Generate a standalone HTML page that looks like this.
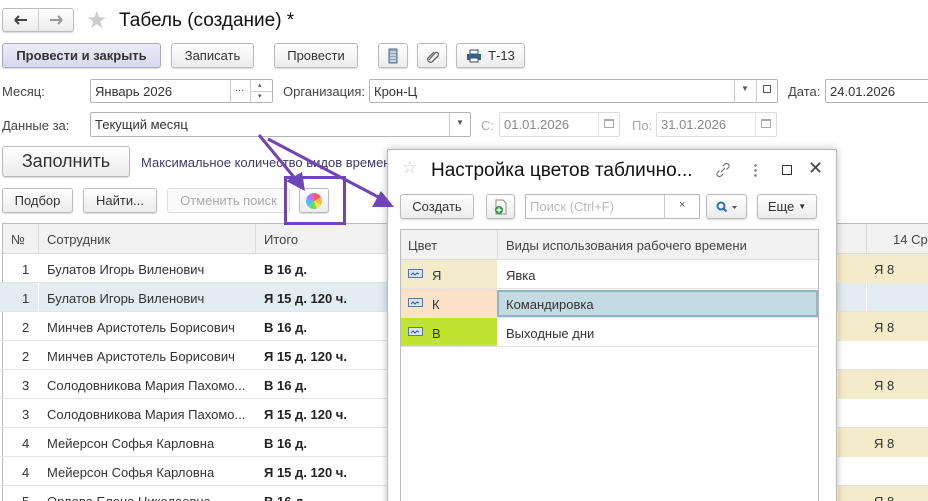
<!DOCTYPE html>
<html><head><meta charset="utf-8"><style>
*{box-sizing:border-box;margin:0;padding:0}
html,body{width:928px;height:501px;overflow:hidden}
body{background:#fff;font-family:"Liberation Sans",Arial,sans-serif;font-size:13px;color:#333;position:relative}
.a{position:absolute}
.btn{position:absolute;border:1px solid #bbb;border-radius:3px;background:linear-gradient(#fff,#ececec);box-shadow:0 1px 1px rgba(0,0,0,.15);display:flex;align-items:center;justify-content:center;font-size:13px;color:#333}
.inp{position:absolute;border:1px solid #b5b5b5;border-radius:2px;background:#fff;display:flex;align-items:center;padding-left:4px;font-size:13px;color:#333}
.lbl{position:absolute;font-size:13px;color:#444}
.row{position:absolute;left:0;width:928px;height:29px;border-bottom:1px solid #e4e4e4}
.row span{position:absolute;top:8px}
</style></head><body>
<div class="btn" style="left:2px;top:8px;width:72px;height:24px;padding:0"><svg width="36" height="14"><path d="M12 7h12M12 7l4-4M12 7l4 4" fill="none" stroke="#444" stroke-width="2"/></svg><span style="width:1px;height:22px;background:#ccc"></span><svg width="36" height="14"><path d="M12 7h12M24 7l-4-4M24 7l-4 4" fill="none" stroke="#999" stroke-width="2"/></svg></div>
<div class="a" style="left:86px;top:6px;font-size:24px;color:#ccc">★</div>
<div class="a" style="left:119px;top:10px;font-size:19px;color:#111">Табель (создание) *</div>
<div class="btn" style="left:2px;top:43px;width:159px;height:25px;background:linear-gradient(#ececf8,#d8d8ee);font-weight:bold;color:#333;border-color:#a8a8c8">Провести и закрыть</div>
<div class="btn" style="left:171px;top:43px;width:83px;height:25px">Записать</div>
<div class="btn" style="left:274px;top:43px;width:84px;height:25px">Провести</div>
<div class="btn" style="left:378px;top:43px;width:30px;height:25px"><svg width="10" height="16"><rect x="1" y="1" width="8" height="14" fill="#8aa4c0" stroke="#5a7494"/><path d="M2 4h6M2 7h6M2 10h6M2 13h6" stroke="#fff"/></svg></div>
<div class="btn" style="left:417px;top:43px;width:30px;height:25px"><svg width="14" height="14"><path d="M4 11L10 4a2 2 0 0 1 3 3L7 13a3 3 0 0 1-4-4l6-6" fill="none" stroke="#666" stroke-width="1.3"/></svg></div>
<div class="btn" style="left:456px;top:43px;width:69px;height:25px"><svg width="16" height="14" style="margin-right:6px"><rect x="4" y="1" width="8" height="4" fill="#fff" stroke="#2c4a70"/><rect x="1" y="5" width="14" height="6" fill="#3d5f88"/><rect x="4" y="9" width="8" height="4" fill="#fff" stroke="#2c4a70"/></svg>Т-13</div>
<div class="lbl" style="left:2px;top:84px">Месяц:</div>
<div class="inp" style="left:90px;top:79px;width:183px;height:24px">Январь 2026</div>
<div class="a" style="left:230px;top:80px;width:1px;height:22px;background:#ccc"></div>
<div class="a" style="left:235px;top:82px;font-size:11px;color:#555">...</div>
<div class="a" style="left:250px;top:80px;width:1px;height:22px;background:#ccc"></div>
<div class="a" style="left:251px;top:91px;width:21px;height:1px;background:#ccc"></div>
<div class="a" style="left:258px;top:81px;font-size:7px;color:#555">▴</div>
<div class="a" style="left:258px;top:92px;font-size:7px;color:#555">▾</div>
<div class="lbl" style="left:283px;top:84px">Организация:</div>
<div class="inp" style="left:369px;top:79px;width:409px;height:24px">Крон-Ц</div>
<div class="a" style="left:734px;top:80px;width:1px;height:22px;background:#ccc"></div>
<div class="a" style="left:741px;top:84px;font-size:8px;color:#555">▼</div>
<div class="a" style="left:756px;top:80px;width:1px;height:22px;background:#ccc"></div>
<div class="a" style="left:763px;top:85px;width:8px;height:8px;border:1px solid #555"></div>
<div class="lbl" style="left:788px;top:84px">Дата:</div>
<div class="inp" style="left:825px;top:79px;width:110px;height:24px">24.01.2026</div>
<div class="lbl" style="left:2px;top:118px">Данные за:</div>
<div class="inp" style="left:90px;top:112px;width:381px;height:25px">Текущий месяц</div>
<div class="a" style="left:449px;top:113px;width:1px;height:23px;background:#ccc"></div>
<div class="a" style="left:456px;top:118px;font-size:8px;color:#555">▼</div>
<div class="lbl" style="left:481px;top:118px;color:#aaa">С:</div>
<div class="inp" style="left:499px;top:112px;width:121px;height:25px;color:#888;border-color:#ddd">01.01.2026</div>
<div class="a" style="left:598px;top:113px;width:1px;height:23px;background:#e4e4e4"></div>
<div class="a" style="left:604px;top:119px;width:10px;height:9px;border:1px solid #aaa;border-top-width:2px"></div>
<div class="lbl" style="left:632px;top:118px;color:#aaa">По:</div>
<div class="inp" style="left:656px;top:112px;width:121px;height:25px;color:#888;border-color:#ddd">31.01.2026</div>
<div class="a" style="left:755px;top:113px;width:1px;height:23px;background:#e4e4e4"></div>
<div class="a" style="left:761px;top:119px;width:10px;height:9px;border:1px solid #aaa;border-top-width:2px"></div>
<div class="btn" style="left:2px;top:146px;width:128px;height:31px;font-size:18px;color:#333">Заполнить</div>
<div class="lbl" style="left:141px;top:155px;color:#3c3c6c">Максимальное количество видов времени</div>
<div class="btn" style="left:2px;top:188px;width:71px;height:25px">Подбор</div>
<div class="btn" style="left:83px;top:188px;width:74px;height:25px">Найти...</div>
<div class="btn" style="left:167px;top:188px;width:123px;height:25px;color:#aaa;background:#fafafa;box-shadow:none;border-color:#ddd">Отменить поиск</div>
<div class="btn" style="left:299px;top:188px;width:30px;height:25px"><div style="width:16px;height:16px;border-radius:50%;background:conic-gradient(#f56 0 60deg,#fb4 60deg 120deg,#ee4 120deg 160deg,#6d6 160deg 220deg,#5bf 220deg 290deg,#a7f 290deg 360deg)"></div></div>
<div class="a" style="left:2px;top:223px;width:940px;height:290px;border:1px solid #bbb;border-right:none;border-bottom:none"></div>
<div class="a" style="left:3px;top:224px;width:925px;height:30px;background:#f2f2f2;border-bottom:1px solid #ddd"></div>
<div class="a" style="left:38px;top:224px;width:1px;height:30px;background:#ddd"></div>
<div class="a" style="left:255px;top:224px;width:1px;height:30px;background:#ddd"></div>
<div class="a" style="left:866px;top:224px;width:1px;height:30px;background:#ddd"></div>
<div class="lbl" style="left:11px;top:232px">№</div>
<div class="lbl" style="left:47px;top:232px">Сотрудник</div>
<div class="lbl" style="left:264px;top:232px">Итого</div>
<div class="lbl" style="left:893px;top:232px">14 Ср</div>
<div class="row" style="top:254px"><div class="a" style="left:838px;top:0;width:90px;height:29px;background:#f3ebc9"></div><span style="left:22px">1</span><span style="left:47px">Булатов Игорь Виленович</span><span style="left:264px;font-weight:bold;color:#222">В 16 д.</span><span style="left:874px">Я 8</span></div>
<div class="row" style="top:283px;background:#e2ecf1"><div class="a" style="left:38px;top:0;width:1px;height:29px;background:#fff"></div><div class="a" style="left:866px;top:0;width:1px;height:29px;background:#fff"></div><span style="left:22px">1</span><span style="left:47px">Булатов Игорь Виленович</span><span style="left:264px;font-weight:bold;color:#222">Я 15 д. 120 ч.</span></div>
<div class="row" style="top:312px"><div class="a" style="left:838px;top:0;width:90px;height:29px;background:#f3ebc9"></div><span style="left:22px">2</span><span style="left:47px">Минчев Аристотель Борисович</span><span style="left:264px;font-weight:bold;color:#222">В 16 д.</span><span style="left:874px">Я 8</span></div>
<div class="row" style="top:341px"><span style="left:22px">2</span><span style="left:47px">Минчев Аристотель Борисович</span><span style="left:264px;font-weight:bold;color:#222">Я 15 д. 120 ч.</span></div>
<div class="row" style="top:370px"><div class="a" style="left:838px;top:0;width:90px;height:29px;background:#f3ebc9"></div><span style="left:22px">3</span><span style="left:47px">Солодовникова Мария Пахомо...</span><span style="left:264px;font-weight:bold;color:#222">В 16 д.</span><span style="left:874px">Я 8</span></div>
<div class="row" style="top:399px"><span style="left:22px">3</span><span style="left:47px">Солодовникова Мария Пахомо...</span><span style="left:264px;font-weight:bold;color:#222">Я 15 д. 120 ч.</span></div>
<div class="row" style="top:428px"><div class="a" style="left:838px;top:0;width:90px;height:29px;background:#f3ebc9"></div><span style="left:22px">4</span><span style="left:47px">Мейерсон Софья Карловна</span><span style="left:264px;font-weight:bold;color:#222">В 16 д.</span><span style="left:874px">Я 8</span></div>
<div class="row" style="top:457px"><span style="left:22px">4</span><span style="left:47px">Мейерсон Софья Карловна</span><span style="left:264px;font-weight:bold;color:#222">Я 15 д. 120 ч.</span></div>
<div class="row" style="top:486px"><div class="a" style="left:838px;top:0;width:90px;height:29px;background:#f3ebc9"></div><span style="left:22px">5</span><span style="left:47px">Орлова Елена Николаевна</span><span style="left:264px;font-weight:bold;color:#222">В 16 д.</span><span style="left:874px">Я 8</span></div>
<div class="a" style="left:387px;top:149px;width:450px;height:400px;background:#fff;border:1px solid #bbb;box-shadow:0 0 8px rgba(0,0,0,.25)"></div>
<div class="a" style="left:402px;top:158px;font-size:17px;color:#ccc">☆</div>
<div class="a" style="left:431px;top:160px;font-size:19px;color:#111">Настройка цветов таблично...</div>
<svg class="a" style="left:714px;top:161px" width="18" height="18"><path d="M7 11l4-4M5.5 9.5l-2 2a2.5 2.5 0 0 0 3.5 3.5l2-2M12.5 8.5l2-2a2.5 2.5 0 0 0-3.5-3.5l-2 2" fill="none" stroke="#777" stroke-width="1.2"/></svg>
<div class="a" style="left:754px;top:163px;width:3px;height:14px;background:radial-gradient(circle,#888 1.2px,transparent 1.5px) 0 0/3px 5px"></div>
<div class="a" style="left:782px;top:165px;width:10px;height:10px;border:1.5px solid #333"></div>
<div class="a" style="left:808px;top:158px;font-size:18px;color:#444">✕</div>
<div class="btn" style="left:400px;top:194px;width:74px;height:25px">Создать</div>
<div class="btn" style="left:486px;top:194px;width:29px;height:25px"><svg width="14" height="16"><path d="M2 1h7l3 3v11H2z" fill="#fff" stroke="#888"/><circle cx="5" cy="11" r="4" fill="#2a9a3a"/><path d="M5 8.5v5M2.5 11h5" stroke="#fff" stroke-width="1.4"/></svg></div>
<div class="inp" style="left:525px;top:194px;width:175px;height:25px;color:#bbb">Поиск (Ctrl+F)</div>
<div class="a" style="left:664px;top:195px;width:1px;height:23px;background:#ccc"></div>
<div class="a" style="left:679px;top:199px;font-size:11px;color:#555">×</div>
<div class="btn" style="left:706px;top:194px;width:41px;height:25px"><svg width="22" height="12"><circle cx="5" cy="5" r="3.5" fill="none" stroke="#2870b8" stroke-width="2"/><path d="M7.5 7.5l3 3" stroke="#2870b8" stroke-width="2.2"/><path d="M16 5h5l-2.5 3z" fill="#555"/></svg></div>
<div class="btn" style="left:757px;top:194px;width:60px;height:25px">Еще <span style="font-size:8px;margin-left:4px">▼</span></div>
<div class="a" style="left:400px;top:229px;width:419px;height:330px;border:1px solid #bbb"></div>
<div class="a" style="left:401px;top:230px;width:417px;height:30px;background:#f2f2f2;border-bottom:1px solid #ddd"></div>
<div class="a" style="left:497px;top:230px;width:1px;height:30px;background:#ddd"></div>
<div class="lbl" style="left:408px;top:238px">Цвет</div>
<div class="lbl" style="left:506px;top:238px">Виды использования рабочего времени</div>
<div class="a" style="left:401px;top:260px;width:417px;height:29px;border-bottom:1px solid #e4e4e4"></div>
<div class="a" style="left:401px;top:260px;width:96px;height:28px;background:#f3ebc9"></div>
<div class="a" style="left:401px;top:289px;width:417px;height:29px;border-bottom:1px solid #e4e4e4"></div>
<div class="a" style="left:401px;top:289px;width:96px;height:28px;background:#fde1c9"></div>
<div class="a" style="left:497px;top:290px;width:321px;height:27px;background:#c4dbe3;border:2px solid #8fb6c8"></div>
<div class="a" style="left:401px;top:318px;width:417px;height:29px;border-bottom:1px solid #e4e4e4"></div>
<div class="a" style="left:401px;top:318px;width:96px;height:28px;background:#c1e332"></div>
<svg class="a" style="left:408px;top:269px" width="15" height="10"><rect x=".5" y=".5" width="14" height="8" fill="#d8e6f4" stroke="#5577aa"/><path d="M3 6l2-2 2 2 2-2 2 1" fill="none" stroke="#335599"/></svg>
<svg class="a" style="left:408px;top:298px" width="15" height="10"><rect x=".5" y=".5" width="14" height="8" fill="#d8e6f4" stroke="#5577aa"/><path d="M3 6l2-2 2 2 2-2 2 1" fill="none" stroke="#335599"/></svg>
<svg class="a" style="left:408px;top:327px" width="15" height="10"><rect x=".5" y=".5" width="14" height="8" fill="#d8e6f4" stroke="#5577aa"/><path d="M3 6l2-2 2 2 2-2 2 1" fill="none" stroke="#335599"/></svg>
<div class="lbl" style="left:432px;top:268px;color:#333">Я</div>
<div class="lbl" style="left:432px;top:297px;color:#333">К</div>
<div class="lbl" style="left:432px;top:326px;color:#333">В</div>
<div class="lbl" style="left:506px;top:268px;color:#333">Явка</div>
<div class="lbl" style="left:506px;top:297px;color:#333">Командировка</div>
<div class="lbl" style="left:506px;top:326px;color:#333">Выходные дни</div>
<svg class="a" style="left:0;top:0" width="928" height="501">
<rect x="285.5" y="177.5" width="59" height="46" fill="none" stroke="#6f45b8" stroke-width="3"/>
<path d="M259 135L298 182" stroke="#6f45b8" stroke-width="3"/>
<path d="M305 191L286 181L302 172z" fill="#6f45b8"/>
<path d="M268 139L382 199" stroke="#6f45b8" stroke-width="3"/>
<path d="M394 207L372 207L381 191z" fill="#6f45b8"/>
</svg>
</body></html>
